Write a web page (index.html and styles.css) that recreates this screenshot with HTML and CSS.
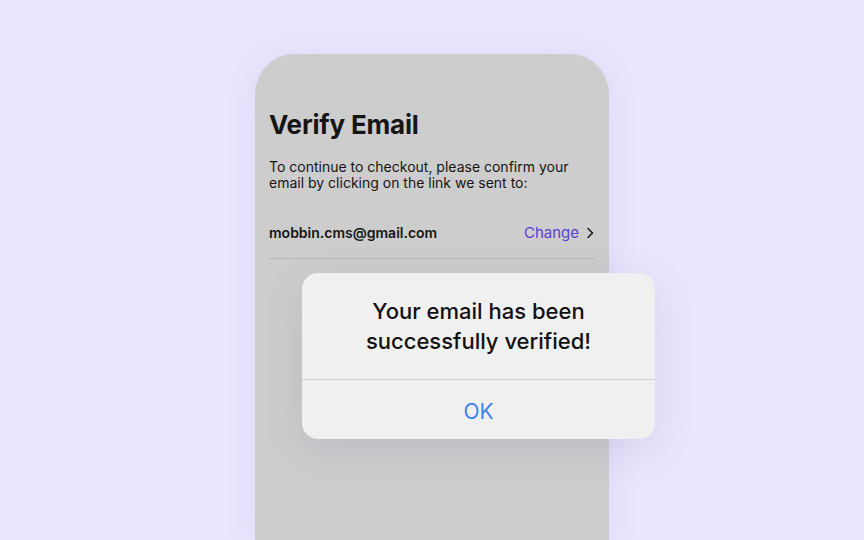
FILE: index.html
```html
<!DOCTYPE html>
<html lang="en">
<head>
    <meta charset="UTF-8">
    <meta name="viewport" content="width=device-width, initial-scale=1.0">
    <title>Verify Email</title>
    <link rel="stylesheet" href="styles.css">
</head>
<body>

    <div class="stage">
        <div class="phone">
            <h1 class="title">Verify Email</h1>
            <p class="intro">To continue to checkout, please confirm your email by clicking on the link we sent to:</p>

            <div class="email-row">
                <span class="email">mobbin.cms@gmail.com</span>
                <span class="change">Change
                    <svg width="10" height="14" viewBox="0 0 10 14" fill="none">
                        <path d="M3 2.5L7.5 7L3 11.5" stroke="#1a1a1a" stroke-width="1.6" stroke-linecap="round" stroke-linejoin="round"/>
                    </svg>
                </span>
            </div>
        </div>

        <div class="alert">
            <div class="alert-msg">Your email has been successfully verified!</div>
            <div class="alert-btn">OK</div>
        </div>
    </div>

</body>
</html>
```

FILE: styles.css
```css
/* page */
body {
    margin: 0;
    height: 100vh;
    overflow: hidden;
    background: #ebe6fd;
    font-family: Inter, "Noto Sans", sans-serif;
}

.stage {
    position: relative;
    width: 864px;
    height: 540px;
    display: flex;
    justify-content: center;
    padding-top: 54px;
    box-sizing: border-box;
}

/* phone frame */
.phone {
    width: 354px;
    height: 486px;
    box-sizing: border-box;
    padding: 55px 14px 0 14px;
    background: #cdcdcd;
    border-radius: 40px 40px 0 0;
    box-shadow: 0 4px 30px rgba(120, 100, 200, 0.12);
}

.title {
    margin: 0;
    font-size: 26px;
    font-weight: 700;
    color: #151515;
    letter-spacing: -0.2px;
}

.intro {
    margin: 19px 0 0;
    font-size: 14px;
    line-height: 16px;
    color: #151515;
}

.email-row {
    display: flex;
    justify-content: space-between;
    align-items: center;
    margin-top: 32px;
    padding: 0 0 16px;
    border-bottom: 1px solid #b8b8b8;
}

.email {
    font-size: 14px;
    font-weight: 600;
    color: #151515;
}

.change {
    display: flex;
    align-items: center;
    gap: 6px;
    font-size: 15px;
    color: #5a3fd2;
}

/* alert dialog */
.alert {
    position: absolute;
    left: 302px;
    top: 273px;
    width: 353px;
    height: 166px;
    background: #f0f0f0;
    border-radius: 16px;
    box-shadow: 0 10px 40px rgba(90, 80, 140, 0.14);
    display: flex;
    flex-direction: column;
}

.alert-msg {
    height: 107px;
    box-sizing: border-box;
    padding: 23px 50px 0;
    text-align: center;
    font-size: 22px;
    line-height: 30px;
    font-weight: 500;
    color: #111;
    border-bottom: 1px solid #d0d0d0;
}

.alert-btn {
    flex: 1;
    display: flex;
    align-items: center;
    justify-content: center;
    padding-top: 3px;
    font-size: 21px;
    color: #3d80ee;
}
```
